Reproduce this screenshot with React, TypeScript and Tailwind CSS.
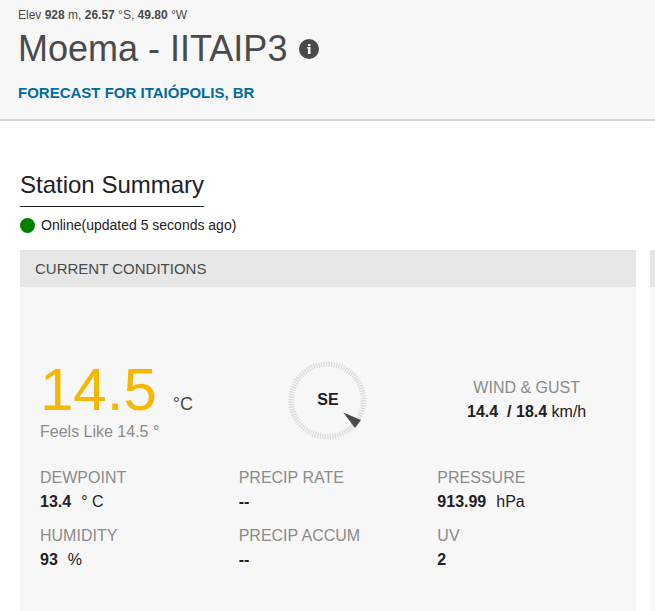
import React from 'react';

interface Reading {
  label: string;
  value: string;
  unit?: string;
}

const readings: Reading[] = [
  { label: 'DEWPOINT', value: '13.4', unit: '° C' },
  { label: 'PRECIP RATE', value: '--' },
  { label: 'PRESSURE', value: '913.99', unit: 'hPa' },
  { label: 'HUMIDITY', value: '93', unit: '%' },
  { label: 'PRECIP ACCUM', value: '--' },
  { label: 'UV', value: '2' },
];

const InfoIcon: React.FC = () => (
  <svg viewBox="0 0 20 20" className="w-5 h-5" aria-hidden="true">
    <circle cx="10" cy="10" r="10" fill="#4a4a4a" />
    <path d="M9 5h2.5v2H9zM8.2 8h3.3v7H9V9.6h-.8z" fill="#f7f7f7" />
  </svg>
);

const WindDial: React.FC<{ direction: string }> = ({ direction }) => (
  <div className="relative w-20 h-20">
    <svg viewBox="0 0 80 80" className="w-20 h-20" aria-hidden="true">
      <circle
        cx="39.3"
        cy="40.3"
        r="36.25"
        fill="none"
        stroke="#dadada"
        strokeWidth="5.5"
        pathLength={180}
        strokeDasharray="1 1"
      />
      <path d="M55.3 52.5 73 60 67 68z" fill="#4a4a4a" />
    </svg>
    <span className="absolute inset-0 flex items-center justify-center font-bold">{direction}</span>
  </div>
);

const App: React.FC = () => {
  return (
    <div className="min-h-screen overflow-hidden bg-white font-['Liberation_Sans',Arial,sans-serif] text-[#1e2023]">
      {/* Station header */}
      <header className="bg-[#f7f7f7] border-b-2 border-[#d5d5d5] px-[18px] pt-1.5 pb-4 text-[#4a4a4a]">
        <p className="text-xs leading-[18px]">
          Elev <strong>928</strong> m, <strong>26.57</strong> °S, <strong>49.80</strong> °W
        </p>
        <div className="flex items-center gap-3">
          <h1 className="text-4xl leading-[50px]">Moema - IITAIP3</h1>
          <button type="button" aria-label="Station info">
            <InfoIcon />
          </button>
        </div>
        <a href="#forecast" className="block mt-[9px] text-[15px] leading-5 font-bold text-[#006d9e]">
          FORECAST FOR ITAIÓPOLIS, BR
        </a>
      </header>

      <main className="pl-5 pt-12">
        <h2 className="inline-block border-b border-[#1e2023] pb-[5px] text-2xl leading-8">Station Summary</h2>
        <div className="flex items-center gap-1.5 mt-2 text-sm">
          <span className="w-[15px] h-[15px] rounded-full bg-[#008000]" />
          <p>Online(updated 5 seconds ago)</p>
        </div>

        <div className="flex gap-3.5 mt-[15px]">
          {/* Current conditions */}
          <section className="grow bg-[#f7f7f7]">
            <h3 className="bg-[#e6e6e6] px-[15px] py-2 text-[15px] leading-[21px] text-[#4a4a4a]">
              CURRENT CONDITIONS
            </h3>
            <div className="px-2.5 pt-[69px] pb-10">
              <div className="grid grid-cols-3 items-center">
                <div className="px-2.5 pt-1">
                  <div className="flex items-baseline gap-4">
                    <span className="text-[60px] leading-[60px] text-[#f5b700]">14.5</span>
                    <span className="text-lg leading-6 text-[#4a4a4a]">°C</span>
                  </div>
                  <p className="leading-6 text-[#8b8b8b]">Feels Like 14.5 °</p>
                </div>
                <div className="flex justify-center">
                  <WindDial direction="SE" />
                </div>
                <div className="px-2.5 text-center leading-6">
                  <p className="text-[#8b8b8b]">WIND &amp; GUST</p>
                  <p>
                    <strong>14.4 &nbsp;/ 18.4</strong> km/h
                  </p>
                </div>
              </div>
              <dl className="grid grid-cols-3 gap-y-2.5 mt-[22px] leading-6">
                {readings.map((reading) => (
                  <div key={reading.label} className="px-2.5">
                    <dt className="text-[#8b8b8b]">{reading.label}</dt>
                    <dd>
                      <strong>{reading.value}</strong>
                      {reading.unit && <span className="ml-2.5">{reading.unit}</span>}
                    </dd>
                  </div>
                ))}
              </dl>
            </div>
          </section>

          {/* Edge of the next card */}
          <section className="w-[5px] shrink-0 bg-[#f7f7f7]">
            <div className="h-[37px] bg-[#e6e6e6]" />
          </section>
        </div>
      </main>
    </div>
  );
};

export default App;
